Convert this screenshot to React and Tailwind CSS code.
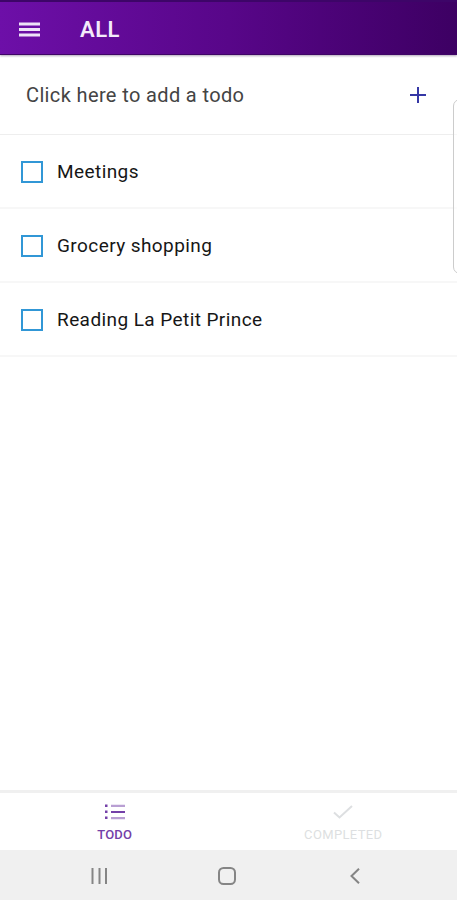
import React, { useState } from 'react';

const initialTodos = [
    { id: 1, title: 'Meetings' },
    { id: 2, title: 'Grocery shopping' },
    { id: 3, title: 'Reading La Petit Prince' },
];

const App = () => {
    const [todos, setTodos] = useState(initialTodos);

    const toggleTodo = (id) => {
        setTodos(todos.map((todo) => (todo.id === id ? { ...todo, done: !todo.done } : todo)));
    };

    return (
        <div className="relative flex h-[900px] w-full flex-col overflow-hidden bg-white font-['Roboto',sans-serif]">
            <header className="flex h-[55px] shrink-0 items-center border-t-2 border-b border-t-[#3d0568] border-b-[#3f0566] bg-linear-to-r from-[#6d0fa8] via-[#580689] to-[#3d0063] pl-[19px] pt-[2px] shadow-[0_1px_2px_rgba(60,30,80,0.4)]">
                <button type="button" aria-label="Menu" className="text-[#eee2f8]">
                    <svg width="21" height="15" viewBox="0 0 21 15" fill="currentColor">
                        <path d="M0 0.4h21v3H0zM0 6h21v3H0zM0 11.6h21v3H0z" />
                    </svg>
                </button>
                <h1 className="ml-[40px] mt-[2px] text-[22px] font-semibold leading-none tracking-[0.5px] text-[#f3eafa]">ALL</h1>
            </header>

            <main className="flex-grow">
                <div className="flex h-[80px] items-center justify-between border-b border-[#eeeeee] pl-[26px] pr-[31px] pt-[1px]">
                    <span className="text-[20px] tracking-[0.37px] text-[#444444]">Click here to add a todo</span>
                    <button type="button" aria-label="Add todo" className="text-[#3537a5]">
                        <svg width="16" height="16" viewBox="0 0 16 16" fill="none" stroke="currentColor" strokeWidth="2">
                            <path d="M8 0v16M8 0v16M0 8h16" />
                        </svg>
                    </button>
                </div>

                <ul>
                    {todos.map((todo) => (
                        <li key={todo.id} className="flex h-[74px] items-center border-b-2 border-[#f7f7f7] pl-[21px]">
                            <button
                                type="button"
                                role="checkbox"
                                aria-checked={!!todo.done}
                                aria-label={todo.title}
                                onClick={() => toggleTodo(todo.id)}
                                className={`mt-px h-[22px] w-[22px] border-2 border-[#3197d6] ${todo.done ? 'bg-[#3197d6]' : 'bg-white'}`}
                            ></button>
                            <span className="ml-[14px] mt-[3px] text-[19px] tracking-[0.42px] text-[#161616]">{todo.title}</span>
                        </li>
                    ))}
                </ul>
            </main>

            {/* Edge panel handle */}
            <div className="absolute top-[99px] -right-[10px] h-[175px] w-[14px] rounded-[7px] border border-[#cccccc] bg-white/60"></div>

            <nav className="grid h-[60px] shrink-0 grid-cols-2 border-t-[3px] border-[#f0f0f0]">
                <button type="button" className="flex flex-col items-center pt-[11px] text-[#7440a8]">
                    <svg className="ml-[2px]" width="20" height="16" viewBox="0 0 20 16" fill="currentColor">
                        <path d="M0 0.5h2.5v2.5H0zM0 6.5h2.5v2.5H0zM0 12.5h2.5v2.5H0z" />
                        <path opacity="0.5" d="M6 0.8h14v2.2H6zM6 13h14v2.2H6z" />
                        <path d="M6 7h14v2H6z" />
                    </svg>
                    <span className="ml-[1px] mt-[8px] text-[13px] font-medium leading-none tracking-[0.2px]">TODO</span>
                </button>
                <button type="button" className="flex flex-col items-center pt-[12px] text-[#dddfe1]">
                    <svg width="20" height="14" viewBox="0 0 20 14" fill="none" stroke="currentColor" strokeWidth="2">
                        <path d="M1 7.5l5.5 5L19 1" />
                    </svg>
                    <span className="ml-[1px] mt-[9px] text-[13px] leading-none tracking-[0.35px]">COMPLETED</span>
                </button>
            </nav>

            <footer className="grid h-[50px] shrink-0 grid-cols-[127px_128px_128px] items-center justify-items-center bg-[#f0f0f0] pl-[36px] pt-px text-[#858585]">
                <svg width="17" height="16" viewBox="0 0 17 16" fill="none" stroke="currentColor" strokeWidth="2">
                    <path d="M1.5 0v16M8.5 0v16M15 0v16" />
                </svg>
                <svg width="18" height="18" viewBox="0 0 18 18" fill="none" stroke="currentColor" strokeWidth="2">
                    <rect x="1" y="1" width="16" height="16" rx="4.5" />
                </svg>
                <svg width="10" height="16" viewBox="0 0 10 16" fill="none" stroke="currentColor" strokeWidth="2">
                    <path d="M9 0.7L1.5 8L9 15.3" />
                </svg>
            </footer>
        </div>
    );
};

export default App;
